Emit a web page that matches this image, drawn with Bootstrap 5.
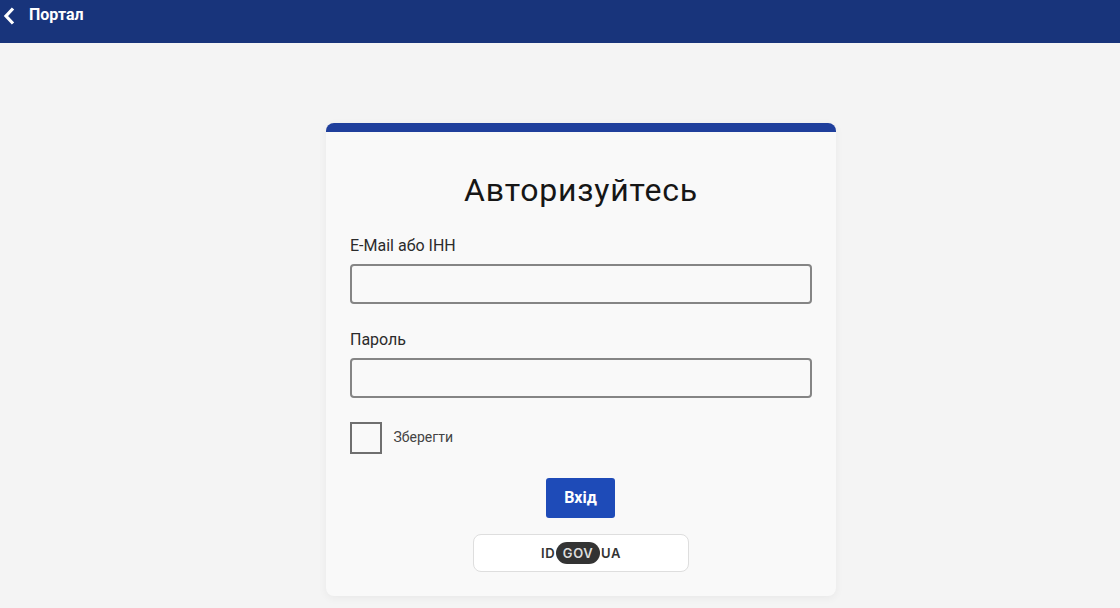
<!DOCTYPE html>
<html lang="uk"><head><meta charset="utf-8"><title>Портал</title>
<link href="https://cdn.jsdelivr.net/npm/bootstrap@5.3.0/dist/css/bootstrap.min.css" rel="stylesheet">
<style>
html,body{height:608px;overflow:hidden}
body{background:#f4f4f4;font-family:Roboto,sans-serif;color:#212121}
.topbar{height:43px;background:#18347b;padding:5px 0 0 3px;color:#fff;font-weight:700;font-size:16px;line-height:20px}
.topbar svg{margin-top:2px;margin-right:14px}
.auth-box{width:510px;margin:80px 0 0 326px;background:#f9f9f9;border-top:9px solid #1f3f9c;border-radius:8px;padding:38px 24px 24px;box-shadow:0 2px 8px rgba(0,0,0,.05)}
.auth-title{font-size:32px;font-weight:400;line-height:40px;letter-spacing:.8px;text-align:center;margin:0 0 25px;color:#161616}
.field-label{font-size:16px;line-height:22px;margin-bottom:7px;color:#2b2b2b}
.pass-label{margin-top:25px}
.field-input{height:40px;border:2px solid #858585;border-radius:4px;background:#f9f9f9;margin-bottom:24px}
.field-input:focus{background:#f9f9f9;border-color:#858585;box-shadow:none}
.form-check-input.save-check{width:32px;height:32px;margin:0;border:2px solid #6f6f6f;border-radius:0;background-color:#f9f9f9}
.save-label{font-size:14px;color:#444;margin-left:11.5px;padding-bottom:2px}
.login-btn{width:69px;height:40px;margin-right:1px;background:#1e4bb8;border:0;border-radius:3px;font-weight:700;font-size:16px;padding:0;color:#fff}
.gov-btn{width:216px;height:38px;background:#fff;border:1px solid #dedede;border-radius:8px;padding:0;font-size:13px;font-weight:600;font-family:Inter,sans-serif;color:#333;letter-spacing:.5px;line-height:22px}
.gov-pill{display:inline-block;width:44px;height:22px;background:#333;color:#ddd;border-radius:11px;margin:0 1px;text-align:center;letter-spacing:.7px}
</style></head><body>
<header class="topbar d-flex align-items-start"><svg width="12" height="18" viewBox="0 0 12 18"><path d="M10 1.500 3 9l7 7.500" fill="none" stroke="#fff" stroke-width="3.200"/></svg><span>Портал</span></header>
<main class="auth-box">
<h1 class="auth-title">Авторизуйтесь</h1>
<form>
<label class="field-label d-block" for="em">E-Mail або ІНН</label>
<input class="form-control field-input" id="em" type="text">
<label class="field-label pass-label d-block" for="pw">Пароль</label>
<input class="form-control field-input" id="pw" type="password">
<div class="d-flex align-items-center mb-4"><input class="form-check-input save-check" type="checkbox" id="sv"><label class="save-label" for="sv">Зберегти</label></div>
<div class="text-center mb-3"><button type="button" class="btn btn-primary login-btn">Вхід</button></div>
<div class="text-center"><button type="button" class="btn gov-btn">ID<span class="gov-pill">GOV</span>UA</button></div>
</form>
</main>
</body></html>
